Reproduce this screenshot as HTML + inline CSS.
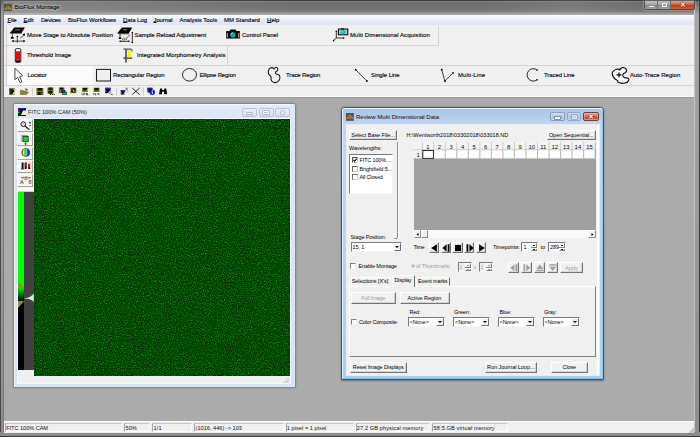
<!DOCTYPE html>
<html><head><meta charset="utf-8"><title>BioFlux Montage</title>
<style>
html,body{margin:0;padding:0;}
body{width:700px;height:437px;overflow:hidden;position:relative;background:#ababab;font-family:"Liberation Sans",sans-serif;font-size:6px;color:#111;}
.a{position:absolute;}
.t{position:absolute;white-space:nowrap;line-height:8px;height:8px;}
/* main frame */
#titlebar{left:0;top:0;width:700px;height:15px;background:linear-gradient(90deg,rgba(255,255,255,.16) 0,rgba(255,255,255,.12) 80px,rgba(255,255,255,0) 300px,rgba(255,255,255,0) 480px,rgba(255,255,255,.07) 570px,rgba(255,255,255,0) 640px),linear-gradient(#3e3e3e 0,#3e3e3e 0.7px,#8a8a8a 1px,#6e6e6e 2.2px,#707070 6px,#787878 11px,#8c8c8c 12.5px,#a6a6a6 14px);}
#menubar{left:4px;top:14.5px;width:690px;height:11px;background:linear-gradient(#fbfcfe,#e4e9f6 60%,#dde3f2);border-bottom:1px solid #f0f0f0;}
#tb{left:4px;top:25px;width:690px;height:72px;background:#f0f0f0;}
.hl{position:absolute;height:1px;background:#d4d4d4;}
.vl{position:absolute;width:1px;background:#d4d4d4;}
#lb,#rb{top:1px;height:436px;background:linear-gradient(#6a6a6a 0,#a6a6a6 14px,#a2a2a2 100px,#8c8c8c 100%);box-sizing:border-box}
#lb{width:4px;border-left:1px solid #4a4a4a;border-right:1px solid #7a7a7a}
#rb{width:6px;border-right:1px solid #3c3c3c;border-left:1px solid #c4c4c4}
#bb{left:0;top:432px;width:700px;height:5px;background:#8c8c8c;border-bottom:1px solid #3c3c3c;box-sizing:border-box}
#status{left:4px;top:421px;width:690px;height:11.5px;background:#f0f0f0;border-top:1px solid #fbfbfb;box-sizing:border-box}
.pane{position:absolute;top:1.4px;height:8.6px;border:1px solid;border-color:#c4c4c4 #fcfcfc #fcfcfc #a4a4a4;box-sizing:border-box;}
.pane span{position:absolute;left:0.2px;top:-0.4px;line-height:8px;font-size:5.6px;white-space:nowrap;color:#111}
u{text-decoration-thickness:0.5px;text-underline-offset:0.4px}
.m{font-size:6px;color:#0a0a12;top:16px;-webkit-text-stroke:0.15px #0a0a12;}
.tbt{font-size:6px;color:#0a0a12;-webkit-text-stroke:0.15px #0a0a12;}
/* child windows */
.win{position:absolute;box-sizing:border-box;border:1px solid #5a6470;border-radius:3px;}
.d{font-size:5.5px;color:#000;font-family:"Liberation Sans",sans-serif;}
.btn{position:absolute;box-sizing:border-box;border:1px solid;border-color:#fff #747474 #747474 #fff;background:#f1f1f1;box-shadow:inset -0.6px -0.6px 0 #bcbcbc;text-align:center;font-size:5.5px;line-height:9px;white-space:nowrap;}
.btn.dis{color:#a0a0a0;}
.sunk{position:absolute;box-sizing:border-box;border:1px solid;border-color:#7c7c7c #f6f6f6 #f6f6f6 #7c7c7c;background:#fff;}
.cb{position:absolute;box-sizing:border-box;width:5.6px;height:5.6px;border:1px solid;border-color:#808080 #f0f0f0 #f0f0f0 #808080;background:#fff;}
.dd{position:absolute;right:0;top:0;bottom:0;width:7.5px;background:#f0f0f0;box-sizing:border-box;border:1px solid;border-color:#fff #707070 #707070 #fff;}
.dd:after{content:"";position:absolute;left:0.9px;top:2.3px;border:2px solid transparent;border-top:2px solid #000;border-bottom:none;}

.cap{box-sizing:border-box;border:1px solid #b7c3d2;border-radius:2px;background:linear-gradient(#e9eff7,#d5dfec);}
.cap i{position:absolute;box-sizing:border-box;background:#fff;box-shadow:0 0 0 0.6px #8d97a5;}
.cap b{position:absolute;left:0;right:0;top:0;text-align:center;font-size:6px;line-height:8px;color:#f2f4f8;text-shadow:0 0 1px #6b7480,0 0 1px #6b7480;font-weight:normal}
.tool{left:17.4px;width:16.1px;height:13px;box-sizing:border-box;background:#f6f6f6;border:1px solid;border-color:#fff #a4a4a4 #a4a4a4 #fff;}

.cap2{box-sizing:border-box;border:1px solid #879bb8;border-radius:2px;background:linear-gradient(#cfdcf0,#b4c7e3 48%,#a3b9da 52%,#b6cae6);box-shadow:inset 0 0 0 0.7px rgba(255,255,255,.4)}
.cap2 i{position:absolute;box-sizing:border-box;background:#fff;box-shadow:0 0 0 0.7px #6c788c;}
.cap2.cl{background:linear-gradient(#e6a99c,#d2634f 50%,#c23c24 51%,#d8694a);border-color:#7a3a30}
.cap2 b{position:absolute;left:0;right:0;top:-0.6px;text-align:center;font-size:6.5px;line-height:8px;color:#fff;text-shadow:0 0 1px #4a2018,0 0 1px #4a2018;font-weight:bold}
.d .t{font-size:5.5px;color:#000}
.d .t.g{color:#a0a0a0}
.gh{position:absolute;box-sizing:border-box;background:#f0f0f0;border-right:1px solid #a0a0a0;border-bottom:1px solid #a0a0a0;text-align:center;font-size:5.9px;line-height:8px;color:#000;-webkit-text-stroke:0.1px #000}
.gc{position:absolute;box-sizing:border-box;background:#fff;border-right:1px solid #b8b8b8;border-bottom:1px solid #b8b8b8}
.pb svg{position:absolute;left:0.7px;top:1px;width:8px;height:8px}
.pb.dis svg{fill:#a0a0a0;left:1.2px;top:1.4px;width:7.6px;height:7.6px}
.spin u{position:absolute;right:0;top:0;bottom:0;width:6px;background:#f0f0f0;box-sizing:border-box;border:1px solid;border-color:#fff #808080 #808080 #fff}
.spin u:before{content:"";position:absolute;left:-1px;right:-1px;top:2.8px;height:1px;background:#808080;box-shadow:0 1px 0 #fff}
.spin u:after{content:"";position:absolute;left:1px;top:0.8px;width:2px;height:1px;background:#222;box-shadow:0 4px 0 #222}
.spin.dis u:after{background:#a0a0a0;box-shadow:0 4px 0 #a0a0a0}
.spin.dis{background:#f0f0f0}
.tab{box-sizing:border-box;border:1px solid;border-color:#fff #696969 transparent #fff;background:#f0f0f0;font-size:5.5px;line-height:7.2px;text-align:center;white-space:nowrap;border-radius:1px 1px 0 0}
.tab.sel{border-bottom:none;line-height:9px}
</style></head><body>

<!-- MAIN FRAME -->
<div class="a" id="titlebar"></div>
<div class="a" id="lb" style="left:0"></div>
<div class="a" id="rb" style="left:694px"></div>
<div class="a" id="bb"></div>
<div class="a" id="menubar"></div>
<div class="a" id="tb"></div>


<!-- main caption buttons -->
<div class="a" style="left:644px;top:0.8px;width:51px;height:9px;border-radius:0 0 2.5px 2.5px;border:1px solid #4a4a4a;border-top:none;box-sizing:border-box;overflow:hidden;box-shadow:0 0 0 0.6px rgba(255,255,255,.35)">
 <div class="a" style="left:0;top:0;width:12.8px;height:9px;background:linear-gradient(#c0c0c0,#a0a0a0 45%,#8c8c8c 50%,#a8a8a8);border-right:1px solid #6a6a6a;box-sizing:border-box"><i class="a" style="left:3.8px;top:4.8px;width:5px;height:1.6px;background:#f8f8f8;box-shadow:0 0 1px #444"></i></div>
 <div class="a" style="left:12.8px;top:0;width:13.2px;height:9px;background:linear-gradient(#c0c0c0,#a0a0a0 45%,#8c8c8c 50%,#a8a8a8);border-right:1px solid #6a6a6a;box-sizing:border-box"><i class="a" style="left:4px;top:2.2px;width:5px;height:4px;border:1px solid #f4f4f4;border-top-width:1.3px;box-sizing:border-box;box-shadow:0 0 1px #444;background:#999"></i></div>
 <div class="a" style="left:26px;top:0;width:24px;height:9px;background:linear-gradient(#e2a593,#d0563a 45%,#c23a1c 50%,#d86a3e);text-align:center;color:#fff;font-size:7px;line-height:8px;font-weight:bold;text-shadow:0 0 1px #401008,0 0 1px #401008">&#10005;</div>
</div>
<!-- title -->
<svg class="a" style="left:4.3px;top:3.5px" width="7.6" height="7.6" viewBox="0 0 9 9"><rect width="9" height="9" fill="#46505a"/><path d="M1.1 7.2 V5.9 Q1.2 4.6 2.6 4.6 H3.4 M7.9 7.2 V5.9 Q7.8 4.6 6.4 4.6 H5.6 M3.4 7.2 V3.6 Q3.5 2.3 4.5 2.3 Q5.5 2.3 5.6 3.6 V7.2" fill="none" stroke="#f0a020" stroke-width="0.95"/></svg>
<div class="t" style="left:14.6px;top:3.4px;font-size:6px;color:#000;-webkit-text-stroke:0.12px #000;text-shadow:0 0 2px #e8e8e8,0 0 3px #dcdcdc,0 0 4px #d0d0d0">BioFlux Montage</div>

<!-- menu -->
<div class="t m" style="left:7.5px;letter-spacing:-0.168px"><u>F</u>ile</div>
<div class="t m" style="left:23.5px;letter-spacing:-0.086px"><u>E</u>dit</div>
<div class="t m" style="left:41px;letter-spacing:-0.263px">Devices</div>
<div class="t m" style="left:68px;letter-spacing:-0.073px">BioFlux Workflows</div>
<div class="t m" style="left:123px;letter-spacing:-0.045px"><u>D</u>ata Log</div>
<div class="t m" style="left:153.5px;letter-spacing:-0.113px"><u>J</u>ournal</div>
<div class="t m" style="left:179.5px;letter-spacing:-0.016px">Analysis Tools</div>
<div class="t m" style="left:224px;letter-spacing:-0.020px">MM Standard</div>
<div class="t m" style="left:267px;letter-spacing:0.039px"><u>H</u>elp</div>

<!-- toolbar lines -->
<div class="hl" style="left:4px;top:45px;width:435px"></div>
<div class="vl" style="left:438px;top:26px;height:20px"></div>
<div class="hl" style="left:4px;top:65px;width:690px"></div>
<div class="vl" style="left:227px;top:46px;height:20px"></div>
<div class="hl" style="left:4px;top:85px;width:690px"></div>
<div class="hl" style="left:4px;top:96px;width:690px;background:#fafafa"></div>
<div class="hl" style="left:4px;top:97px;width:690px;background:#9a9a9a"></div>

<div class="vl" style="left:6px;top:26px;height:19px;background:#cfcfcf"></div><div class="vl" style="left:6px;top:46px;height:19px;background:#cfcfcf"></div><div class="vl" style="left:6px;top:66px;height:19px;background:#cfcfcf"></div>
<!-- toolbar text -->
<div class="t tbt" style="left:27px;top:31px;letter-spacing:-0.013px">Move Stage to Absolute Position</div>
<div class="t tbt" style="left:134.5px;top:31px;letter-spacing:-0.036px">Sample Reload Adjustment</div>
<div class="t tbt" style="left:242px;top:31px;letter-spacing:-0.020px">Control Panel</div>
<div class="t tbt" style="left:350px;top:31px;letter-spacing:0.072px">Multi Dimensional Acquisition</div>
<div class="t tbt" style="left:27px;top:51.1px;letter-spacing:-0.069px">Threshold Image</div>
<div class="t tbt" style="left:137px;top:51.1px;letter-spacing:0.028px">Integrated Morphometry Analysis</div>
<div class="a" style="left:7px;top:66px;width:86px;height:19px;background:#fbfbfb"></div>
<div class="t tbt" style="left:27.5px;top:71.1px;letter-spacing:-0.117px">Locator</div>
<div class="t tbt" style="left:113px;top:71.1px;letter-spacing:-0.091px">Rectangular Region</div>
<div class="t tbt" style="left:199.5px;top:71.1px;letter-spacing:-0.147px">Ellipse Region</div>
<div class="t tbt" style="left:286px;top:71.1px;letter-spacing:-0.125px">Trace Region</div>
<div class="t tbt" style="left:371px;top:71.1px;letter-spacing:-0.100px">Single Line</div>
<div class="t tbt" style="left:458px;top:71.1px;letter-spacing:0.108px">Multi-Line</div>
<div class="t tbt" style="left:544px;top:71.1px;letter-spacing:-0.097px">Traced Line</div>
<div class="t tbt" style="left:630px;top:71.1px;letter-spacing:0.009px">Auto-Trace Region</div>


<!-- IMAGE WINDOW -->
<div class="win" id="imgwin" style="left:13px;top:103px;width:283px;height:285px;background:linear-gradient(#e3ecf7,#dbe6f3 16px,#d5e3f3);border-color:#7f8790;border-radius:3px 3px 1px 1px;box-shadow:0 0 1.5px rgba(0,0,0,.3)">
 <div class="a" style="left:0;top:0;right:0;bottom:0;border:1px solid;border-color:#f6f9fc #dbe8f6 #dbe8f6 #f2f6fb;border-radius:2px 2px 0 0"></div>
</div>
<svg class="a" style="left:18px;top:108px" width="8" height="8" viewBox="0 0 8 8"><rect width="8" height="8" fill="#111"/><rect width="8" height="1.5" fill="#1414c8"/><rect x="0" y="1.5" width="1.5" height="2" fill="#c01010"/><rect x="0" y="3.5" width="1.5" height="2" fill="#10c010"/><path d="M3 7 L5 2.5 L8 2.5 L8 7Z" fill="#e8e8e8"/></svg>
<div class="t" style="left:28px;top:108px;font-size:5.7px;letter-spacing:-0.05px;color:#1a1a1a">FITC 100% CAM (50%)</div>
<div class="a cap" style="left:242px;top:108px;width:15px;height:9px"><i style="left:4.2px;top:3.5px;width:4.8px;height:1.7px"></i></div>
<div class="a cap" style="left:258.5px;top:108px;width:15px;height:9px"><i style="left:3.9px;top:1.6px;width:5.2px;height:3.8px;border:1px solid #fff;border-top-width:1.2px;background:#b4bdc9"></i></div>
<div class="a cap" style="left:275px;top:108px;width:15px;height:9px"><b>&#10006;</b></div>
<div class="a" style="left:17px;top:118px;width:274px;height:266px;background:#f0f0f0;border:1px solid #f4f8fc;box-sizing:border-box"></div>
<svg class="a" style="left:33.5px;top:118.5px" width="256.6" height="257.3"><filter id="nz" x="0" y="0" width="100%" height="100%" color-interpolation-filters="sRGB"><feTurbulence type="fractalNoise" baseFrequency="0.85" numOctaves="2" seed="7" result="n"/><feColorMatrix type="matrix" in="n" values="0.25 0 0 0 -0.13  0.66 0 0 0 -0.032  0.25 0 0 0 -0.13  0 0 0 0 1"/></filter><rect width="257" height="257.5" fill="#0a5a0a" filter="url(#nz)"/></svg>
<!-- tool buttons -->
<div class="a tool" style="top:119px"></div>
<div class="a tool" style="top:133px"></div>
<div class="a tool" style="top:146.5px"></div>
<div class="a tool" style="top:160px"></div>
<div class="a tool" style="top:173.5px"></div>

<svg class="a" style="left:17px;top:118px" width="18" height="75" viewBox="17 118 18 75">
<circle cx="23.3" cy="124.2" r="2.4" fill="#ddd" stroke="#111" stroke-width="0.9"/><path d="M25 126 L29.3 129.6" stroke="#111" stroke-width="1.2"/><path d="M29 122.6 h2 M30 121.6 v2 M29 125.6 h2" stroke="#22c" stroke-width="0.8"/>
<rect x="21.8" y="135.4" width="5.4" height="5.4" fill="none" stroke="#888" stroke-width="0.8"/><rect x="23" y="136.5" width="5.2" height="5.2" fill="#0e0" stroke="#111" stroke-width="0.7"/><path d="M25.6 141.8 V144.6 M24.6 143.4 L25.6 144.8 L26.6 143.4" stroke="#111" stroke-width="0.6" fill="none"/>
<defs><linearGradient id="rbw" x1="0" x2="1" y1="0" y2="0"><stop offset="0" stop-color="#e11"/><stop offset=".2" stop-color="#fe1"/><stop offset=".42" stop-color="#1e1"/><stop offset=".6" stop-color="#1ee"/><stop offset=".78" stop-color="#11e"/><stop offset="1" stop-color="#e1e"/></linearGradient></defs>
<circle cx="25.8" cy="152.4" r="4" fill="url(#rbw)" stroke="#222" stroke-width="0.6"/>
<rect x="21.6" y="162.5" width="2" height="6" fill="#111"/><rect x="21" y="168.4" width="3.2" height="1" fill="#111"/><rect x="24.7" y="162.5" width="2" height="6.5" fill="#111"/><rect x="24.7" y="163.4" width="2" height="2.6" fill="#e11"/><rect x="28" y="162.5" width="2.2" height="6.5" fill="#e11"/><rect x="28" y="162.5" width="2.2" height="1.4" fill="#eee"/><rect x="28" y="167.6" width="2.2" height="1.4" fill="#222"/>
<path d="M21 177.4 H31 M26 176 V179 M21.4 177.4 q1.2 2.4 2.6 0 M28 177.4 q1.2 2.4 2.6 0 M24 179.2 h4" stroke="#a55a20" stroke-width="0.8" fill="none"/>
</svg>
<div class="t" style="left:20px;top:178.4px;font-size:5.5px;color:#111">A</div>
<div class="t" style="left:28.4px;top:178.4px;font-size:5.5px;color:#333">8</div>
<div class="a" style="left:17.6px;top:187px;width:15.8px;height:4.6px;background:#f6f6f6;border-bottom:1px solid #ccc;box-sizing:border-box"></div>
<!-- LUT -->
<div class="a" style="left:33.2px;top:192px;width:0.6px;height:178px;background:repeating-linear-gradient(#8a8a8a 0,#8a8a8a 1px,#4a4a4a 1px,#4a4a4a 2px)"></div>
<div class="a" style="left:17.8px;top:192px;width:6.2px;height:178px;background:linear-gradient(#00ff00 0,#00ff00 95.7px,#00e800 96px,#000 109px,#000 100%)"></div>
<div class="a" style="left:24px;top:192px;width:9.6px;height:178px;background:#414141"></div>
<svg class="a" style="left:17.8px;top:280px" width="16" height="30" viewBox="0 0 16 30"><path d="M0 2 L6.2 7.7 L0 7.7Z" fill="#8f8f1e"/><path d="M0 21 L6.2 21 L0 28Z" fill="#8f8f1e"/><path d="M6.8 18 Q13 17.6 15.8 13.4 L15.8 22 Q13 18.8 6.8 18.5Z" fill="#e4e4e4"/></svg>
<svg class="a" style="left:283px;top:377px" width="7" height="7" viewBox="0 0 7 7"><path d="M6 0.5 L0.5 6 M6 3 L3 6 M6 5.2 L5.2 6" stroke="#b5b5b5" stroke-width="1"/></svg>

<!-- DIALOG -->
<div class="win" id="dlg" style="left:341px;top:107px;width:262.5px;height:272.5px;background:linear-gradient(#a8c4e6,#b2cbea 8px,#c2d6ef 16px,#b9d3f0 50%,#a9cff2);border-color:#4b535e;border-radius:3.5px 3.5px 1px 1px;box-shadow:0 0.5px 2px rgba(0,0,0,.35)">
 <div class="a" style="left:0;top:0;right:0;bottom:0;border:1px solid;border-color:#eef4fb #86c8f3 #74c2f2 #e2edf9;border-radius:2.5px 2.5px 0 0"></div>
</div>
<svg class="a" style="left:346px;top:112.8px" width="7.8" height="7.8" viewBox="0 0 9 9"><rect width="9" height="9" fill="#46505a"/><path d="M1.1 7.2 V5.9 Q1.2 4.6 2.6 4.6 H3.4 M7.9 7.2 V5.9 Q7.8 4.6 6.4 4.6 H5.6 M3.4 7.2 V3.6 Q3.5 2.3 4.5 2.3 Q5.5 2.3 5.6 3.6 V7.2" fill="none" stroke="#f0a020" stroke-width="0.95"/></svg>
<div class="t" style="left:356px;top:112.5px;font-size:6px;color:#0a0a0a">Review Multi Dimensional Data</div>
<div class="a cap2" style="left:550.3px;top:112.3px;width:14.8px;height:8.4px"><i style="left:4.2px;top:3.8px;width:5px;height:1.7px"></i></div>
<div class="a cap2" style="left:566.7px;top:112.3px;width:14.6px;height:8.4px;opacity:.75"><i style="left:4px;top:1.4px;width:5px;height:4px;background:#c4d0e2;border:0.8px solid #e8eef6;box-shadow:0 0 0 0.7px #7c889c"></i></div>
<div class="a cap2 cl" style="left:583px;top:112.3px;width:15.5px;height:8.4px"><b>&#10005;</b></div>
<div class="a" style="left:346px;top:123.5px;width:254px;height:252px;background:#fff;border:1px solid #e6eef8;box-sizing:border-box"></div>
<div class="a" style="left:347px;top:124.5px;width:250px;height:250px;background:#f0f0f0"></div>
<div class="d">
<div class="btn" style="left:349px;top:130px;width:48px;height:10px"><span style="letter-spacing:-0.049px">Select Base File...</span></div>
<div class="t" style="left:406.5px;top:131px"><span style="letter-spacing:0.028px">H:\Wentworth2018\03302018\033018.ND</span></div>
<div class="btn" style="left:547px;top:130px;width:48.5px;height:10px"><span style="letter-spacing:-0.048px">Open Sequential...</span></div>
<div class="t" style="left:349px;top:143.5px"><span style="letter-spacing:-0.035px">Wavelengths:</span></div>
<div class="sunk" style="left:349px;top:153.5px;width:44px;height:40.5px"></div>
<div class="cb" style="left:351.6px;top:157.2px;width:6.2px;height:6px;border-color:#5a5a5a #c8c8c8 #c8c8c8 #5a5a5a"><svg class="a" style="left:0;top:0" width="4" height="4" viewBox="0 0 4 4"><path d="M0.4 1.9 L1.6 3.3 L3.9 0.5" fill="none" stroke="#000" stroke-width="1.1"/></svg></div>
<div class="t" style="left:359.5px;top:156.2px"><span style="letter-spacing:-0.149px">FITC 100% ...</span></div>
<div class="cb" style="left:351.6px;top:165.7px;width:6.2px;height:6px;border-color:#6a6a6a #c8c8c8 #c8c8c8 #6a6a6a"></div>
<div class="t" style="left:359.5px;top:164.7px"><span style="letter-spacing:-0.059px">Brightfield 5...</span></div>
<div class="cb" style="left:351.6px;top:174.2px;width:6.2px;height:6px;border-color:#6a6a6a #c8c8c8 #c8c8c8 #6a6a6a"></div>
<div class="t" style="left:359.5px;top:173.2px"><span style="letter-spacing:-0.157px">All Closed</span></div>
<div class="a" style="left:396.5px;top:142px;width:1px;height:96px;background:#8a8a8a;box-shadow:1px 0 0 #fff"></div>
<div class="a" style="left:394px;top:237.5px;width:3px;height:1px;background:#8a8a8a"></div>
<!-- grid -->
<div class="a" style="left:413.5px;top:142.3px;width:182px;height:88px;background:#a0a0a0"></div>
<svg class="a" style="left:413.3px;top:142.3px" width="182.3" height="17" viewBox="0 0 182.3 17" font-family="Liberation Sans, sans-serif" font-size="5.9" text-anchor="middle" fill="#0a0a0a">
<rect x="0" y="0" width="182.3" height="7.8" fill="#f3f3f3"/><rect x="0" y="7.8" width="9.2" height="9" fill="#f3f3f3"/><rect x="9.2" y="7.8" width="173.10000000000002" height="9" fill="#fff"/>
<path d="M0 7.8 H182.3" stroke="#c8c8c8" stroke-width="0.7"/><path d="M0 16.6 H182.3" stroke="#a8a8a8" stroke-width="0.6"/>
<path d="M9.20 0 V7.8 M20.73 0 V7.8 M32.27 0 V7.8 M43.80 0 V7.8 M55.33 0 V7.8 M66.87 0 V7.8 M78.40 0 V7.8 M89.93 0 V7.8 M101.47 0 V7.8 M113.00 0 V7.8 M124.53 0 V7.8 M136.07 0 V7.8 M147.60 0 V7.8 M159.13 0 V7.8 M170.67 0 V7.8 M182.20 0 V7.8 " stroke="#c4c4c4" stroke-width="0.8"/><path d="M9.20 7.8 V16.8 M20.73 7.8 V16.8 M32.27 7.8 V16.8 M43.80 7.8 V16.8 M55.33 7.8 V16.8 M66.87 7.8 V16.8 M78.40 7.8 V16.8 M89.93 7.8 V16.8 M101.47 7.8 V16.8 M113.00 7.8 V16.8 M124.53 7.8 V16.8 M136.07 7.8 V16.8 M147.60 7.8 V16.8 M159.13 7.8 V16.8 M170.67 7.8 V16.8 M182.20 7.8 V16.8 " stroke="#a0a0a0" stroke-width="0.8"/>
<text x="14.97" y="6.8">1</text><text x="26.50" y="6.8">2</text><text x="38.03" y="6.8">3</text><text x="49.57" y="6.8">4</text><text x="61.10" y="6.8">5</text><text x="72.63" y="6.8">6</text><text x="84.17" y="6.8">7</text><text x="95.70" y="6.8">8</text><text x="107.23" y="6.8">9</text><text x="118.77" y="6.8">10</text><text x="130.30" y="6.8">11</text><text x="141.83" y="6.8">12</text><text x="153.37" y="6.8">13</text><text x="164.90" y="6.8">14</text><text x="176.43" y="6.8">15</text><text x="5.20" y="14.9">1</text>
<rect x="9.80" y="8.5" width="10.63" height="7.9" fill="#fff" stroke="#2a2a2a" stroke-width="1"/>
</svg>
<div class="a" style="left:413.5px;top:230.3px;width:182px;height:7.7px;background:#fafafa"></div>
<div class="a" style="left:413.5px;top:230.3px;width:7.5px;height:7.7px;background:#f0f0f0;box-sizing:border-box;border:1px solid;border-color:#fff #8a8a8a #8a8a8a #fff"><svg class="a" style="left:1.5px;top:1.5px" width="3" height="3" viewBox="0 0 3 3"><path d="M2.5 0 L0.5 1.5 L2.5 3Z"/></svg></div>
<div class="a" style="left:421px;top:230.3px;width:7px;height:7.7px;background:#f0f0f0;box-sizing:border-box;border:1px solid;border-color:#fff #8a8a8a #8a8a8a #fff"></div>
<div class="a" style="left:588px;top:230.3px;width:7.5px;height:7.7px;background:#f0f0f0;box-sizing:border-box;border:1px solid;border-color:#fff #8a8a8a #8a8a8a #fff"><svg class="a" style="left:2px;top:1.5px" width="3" height="3" viewBox="0 0 3 3"><path d="M0.5 0 L2.5 1.5 L0.5 3Z"/></svg></div>
<!-- stage position -->
<div class="t" style="left:350.5px;top:233px"><span style="letter-spacing:-0.100px">Stage Position:</span></div>
<div class="sunk" style="left:350.5px;top:242px;width:51.5px;height:10px"><span class="t" style="left:1px;top:0px"><span style="letter-spacing:-0.127px">15, 1</span></span><div class="dd"></div></div>
<div class="t" style="left:413.5px;top:242.5px"><span style="letter-spacing:-0.358px">Time</span></div>
<div class="btn pb" style="left:428.7px;top:241.5px;width:10.3px;height:11px"><svg width="7" height="7" viewBox="0 0 7 7"><path d="M6 0.3 L1 3.5 L6 6.7Z"/></svg></div>
<div class="btn pb" style="left:440.5px;top:241.5px;width:10.3px;height:11px"><svg width="7" height="7" viewBox="0 0 7 7"><path d="M4 0.3 L0.3 3.5 L4 6.7Z M5 0.3h1.5v6.4h-1.5z"/></svg></div>
<div class="btn pb" style="left:452.3px;top:241.5px;width:10.3px;height:11px"><svg width="7" height="7" viewBox="0 0 7 7"><path d="M0.8 0.8h5.4v5.4h-5.4z"/></svg></div>
<div class="btn pb" style="left:464.1px;top:241.5px;width:10.3px;height:11px"><svg width="7" height="7" viewBox="0 0 7 7"><path d="M3 0.3 L6.7 3.5 L3 6.7Z M0.5 0.3h1.5v6.4h-1.5z"/></svg></div>
<div class="btn pb" style="left:475.9px;top:241.5px;width:10.3px;height:11px"><svg width="7" height="7" viewBox="0 0 7 7"><path d="M1 0.3 L6 3.5 L1 6.7Z"/></svg></div>
<div class="t" style="left:493px;top:242.5px"><span style="letter-spacing:-0.139px">Timepoints:</span></div>
<div class="sunk spin" style="left:521px;top:242px;width:17px;height:9.5px"><span class="t" style="left:1.5px;top:0">1</span><u></u></div>
<div class="t" style="left:540.5px;top:242.5px">to</div>
<div class="sunk spin" style="left:548px;top:242px;width:17.5px;height:9.5px"><span class="t" style="left:1px;top:0">289</span><u></u></div>
<!-- montage row -->
<div class="cb" style="left:350px;top:263px;width:5.5px;height:5.5px"></div>
<div class="t" style="left:358.5px;top:262px"><span style="letter-spacing:-0.126px">Enable Montage</span></div>
<div class="t g" style="left:411.5px;top:262px"><span style="letter-spacing:-0.091px"># of Thumbnails:</span></div>
<div class="sunk spin dis" style="left:457.5px;top:262px;width:14.5px;height:9.5px"><span class="t g" style="left:1px;top:0">1</span><u></u></div>
<div class="t g" style="left:473.5px;top:262.5px">x</div>
<div class="sunk spin dis" style="left:478.5px;top:262px;width:14px;height:9.5px"><span class="t g" style="left:1px;top:0">1</span><u></u></div>
<div class="btn pb dis" style="left:508.3px;top:261.5px;width:11px;height:11.5px"><svg width="7" height="7" viewBox="0 0 7 7"><path d="M4 0.3 L0.3 3.5 L4 6.7Z M5 0.3h1.5v6.4h-1.5z"/></svg></div>
<div class="btn pb dis" style="left:521px;top:261.5px;width:11px;height:11.5px"><svg width="7" height="7" viewBox="0 0 7 7"><path d="M3 0.3 L6.7 3.5 L3 6.7Z M0.5 0.3h1.5v6.4h-1.5z"/></svg></div>
<div class="btn pb dis" style="left:533.7px;top:261.5px;width:11px;height:11.5px"><svg width="7" height="7" viewBox="0 0 7 7"><path d="M3.5 0.5 L6.7 4.5 L0.3 4.5Z M0.3 5.3h6.4v1.4h-6.4z"/></svg></div>
<div class="btn pb dis" style="left:546.6px;top:261.5px;width:11px;height:11.5px"><svg width="7" height="7" viewBox="0 0 7 7"><path d="M3.5 6.5 L6.7 2.5 L0.3 2.5Z M0.3 0.3h6.4v1.4h-6.4z"/></svg></div>
<div class="btn dis" style="left:560px;top:261.5px;width:23px;height:11.5px;line-height:10px"><span style="letter-spacing:-0.233px">Apply</span></div>
<!-- tabs -->
<div class="a" style="left:349px;top:285.5px;width:246.5px;height:71px;box-sizing:border-box;border:1px solid;border-color:#fff #808080 #808080 #fff"></div>
<div class="a tab" style="left:350.5px;top:277px;width:41px;height:8.5px;border-right-color:transparent;padding-right:2px"><span style="letter-spacing:-0.052px">Selections [X's]</span></div>
<div class="a tab" style="left:415.5px;top:277px;width:34.5px;height:8.5px"><span style="letter-spacing:-0.098px">Event marks</span></div>
<div class="a tab sel" style="left:391.5px;top:275px;width:23px;height:11.5px"><span style="letter-spacing:-0.164px">Display</span></div>
<div class="btn dis" style="left:350.5px;top:292px;width:45.5px;height:12px;line-height:10.5px"><span style="letter-spacing:-0.169px">Full Image</span></div>
<div class="btn" style="left:399.5px;top:292px;width:50px;height:12px;line-height:10.5px"><span style="letter-spacing:-0.011px">Active Region</span></div>
<div class="t" style="left:409.5px;top:308px"><span style="letter-spacing:-0.206px">Red:</span></div>
<div class="t" style="left:454px;top:308px"><span style="letter-spacing:-0.105px">Green:</span></div>
<div class="t" style="left:499.5px;top:308px"><span style="letter-spacing:-0.189px">Blue:</span></div>
<div class="t" style="left:544px;top:308px"><span style="letter-spacing:-0.171px">Gray:</span></div>
<div class="sunk" style="left:407.5px;top:316.5px;width:37px;height:10px"><span class="t" style="left:1px;top:0"><span style="letter-spacing:-0.063px">&lt;None&gt;</span></span><div class="dd"></div></div>
<div class="sunk" style="left:453px;top:316.5px;width:36.5px;height:10px"><span class="t" style="left:1px;top:0"><span style="letter-spacing:-0.063px">&lt;None&gt;</span></span><div class="dd"></div></div>
<div class="sunk" style="left:497.5px;top:316.5px;width:37px;height:10px"><span class="t" style="left:1px;top:0"><span style="letter-spacing:-0.063px">&lt;None&gt;</span></span><div class="dd"></div></div>
<div class="sunk" style="left:542.5px;top:316.5px;width:37px;height:10px"><span class="t" style="left:1px;top:0"><span style="letter-spacing:-0.063px">&lt;None&gt;</span></span><div class="dd"></div></div>
<div class="cb" style="left:351px;top:319px"></div>
<div class="t" style="left:359px;top:318px"><span style="letter-spacing:-0.211px">Color Composite</span></div>
<div class="btn" style="left:349.5px;top:362px;width:57.5px;height:11px;line-height:9.5px"><span style="letter-spacing:-0.130px">Reset Image Displays</span></div>
<div class="btn" style="left:484.5px;top:362px;width:52.5px;height:11px;line-height:9.5px"><span style="letter-spacing:-0.038px">Run Journal Loop...</span></div>
<div class="btn" style="left:550.5px;top:362px;width:37.5px;height:11px;line-height:9.5px"><span style="letter-spacing:-0.132px">Close</span></div>
</div>



<!-- TOOLBAR ICONS -->
<svg class="a" style="left:0;top:0" width="700" height="100" viewBox="0 0 700 100">
<!-- move stage -->
<path d="M14.3 27.4 L24.9 27.4 L21.6 32.8 L21.6 33.6 L10 33.6 L10 32.8Z" fill="#000"/>
<rect x="15.3" y="29.3" width="4.7" height="1.1" fill="#777"/>
<path d="M12.3 33.6 V37.5 M17.3 36.4 V42.8 M12.6 41.1 H24.4 M20.4 38.2 L24 34.6" stroke="#000" stroke-width="0.7" fill="none"/>
<path d="M10.9 36.9 h2.8 v1.9 h-2.8z M16.2 37 L17.3 35.5 L18.4 37z M11.6 41.1 l2-1.3v2.6z M25.4 41.1 l-2-1.3v2.6z M25.2 33.4 l-2.8 0.8 l2 2z" fill="#000"/>
<!-- sample reload -->
<path d="M122 27.4 L132.3 27.4 L129 32.8 L129 33.8 L117.7 33.8 L117.7 32.8Z" fill="#000"/>
<ellipse cx="125.3" cy="29.8" rx="2.2" ry="0.8" fill="#777"/>
<path d="M119.5 33.8 H129 V35.2 H119.5Z" fill="#999" opacity=".55"/><path d="M126 37.6 H128 V36 H129.8 V34.4" stroke="#666" stroke-width="0.6" fill="none"/>
<path d="M120 33.8 V38 M119.6 41.3 H129.5 M132.3 32.3 V42.8" stroke="#000" stroke-width="0.8" fill="none"/>
<path d="M118.8 37.4 h2.5 v1.7 h-2.5z M119.2 41.3 l1.5-1v2z M129.9 41.3 l-1.5-1v2z M132.3 31.6 l-1 1.5h2z M132.3 43.4 l-1-1.5h2z" fill="#000"/>
<path d="M122.3 40 L123.6 37.4 L124.9 40Z M125.4 38 l1.5 2 m0-2 l-1.5 2" stroke="#333" stroke-width="0.5" fill="none"/>
<!-- camera -->
<path d="M226.2 30.9 h3.3 l1-1.4 h5 l1 1.4 h3.3 v7.6 h-13.6z" fill="#050505"/>
<rect x="227" y="33" width="1" height="4.5" fill="#999"/><rect x="238" y="33" width="1.2" height="4.5" fill="#999"/>
<circle cx="233" cy="35" r="3.2" fill="#222"/><circle cx="233" cy="35" r="2.6" fill="#0aa"/><path d="M231 34.6 a2 2 0 0 1 2.2-1.8" stroke="#4ff" stroke-width="1" fill="none"/><path d="M232 37 L234.5 33.5" stroke="#888" stroke-width="0.6"/>
<!-- multi-dim -->
<rect x="338.4" y="29" width="9.4" height="5.8" fill="#bbb" stroke="#000" stroke-width="1"/>
<rect x="341" y="28.4" width="3" height="1" fill="#000"/>
<circle cx="343" cy="32.3" r="2.3" fill="#0bb"/><circle cx="342.5" cy="31.8" r="0.9" fill="#5ee"/>
<path d="M336.3 31.2 V38 H344 M336.3 38 L333.3 40.8" stroke="#000" stroke-width="0.8" fill="none"/>
<path d="M335.2 31.8 l1.1-1.5 l1.1 1.5z M344.8 38 l-1.6-1.1 v2.2z M332.7 41.5 l0.5-2 l1.5 1.5z" fill="#000"/>
<!-- threshold -->
<rect x="15.3" y="48.7" width="5.5" height="13.6" rx="1" fill="#fff" stroke="#000" stroke-width="0.9"/>
<rect x="15.7" y="51.2" width="4.7" height="8" fill="#f00"/><rect x="15.7" y="59.2" width="4.7" height="1.6" fill="#444"/><rect x="15.7" y="60.6" width="4.7" height="1.4" fill="#000"/>
<!-- morphometry -->
<path d="M126 48.8 V62.6" stroke="#5c5c5c" stroke-width="1.8"/>
<path d="M123.4 49.2 H130.6 Q132 49.2 132 51.4" stroke="#5c5c5c" stroke-width="1.3" fill="none"/>
<path d="M123.4 58.1 H132.2" stroke="#5c5c5c" stroke-width="1.7"/>
<path d="M127.3 50.6 H131.2 V52.3 L130.1 53.8 L131.2 55.3 V57.2 H127.3 V55.3 L128.4 53.8 L127.3 52.3Z" fill="#f4f400"/>
<!-- locator -->
<path d="M14.9 68.3 V79.6 L17.6 77.4 L20 82.6 L22 81.8 L19.6 76.8 L22.6 75.6Z" fill="#fff" stroke="#333" stroke-width="0.9" stroke-linejoin="miter"/>
<!-- rectangle -->
<rect x="96.5" y="69.4" width="14" height="11.6" fill="none" stroke="#1a1a1a" stroke-width="1"/>
<!-- ellipse -->
<ellipse cx="189.5" cy="74.8" rx="7" ry="6.3" fill="none" stroke="#111" stroke-width="0.9"/>
<!-- trace region -->
<path d="M271.40 67.70 C270.17 68.23 269.87 67.50 268.90 69.40 C267.93 71.30 268.20 71.40 268.50 73.40 C268.80 75.40 268.97 74.27 269.80 75.40 C270.63 76.53 270.53 75.40 271.00 76.80 C271.47 78.20 270.57 77.90 271.20 79.60 C271.83 81.30 271.30 80.97 272.90 81.90 C274.50 82.83 273.97 82.90 276.00 82.40 C278.03 81.90 277.73 82.27 279.00 80.40 C280.27 78.53 280.00 78.70 279.80 76.80 C279.60 74.90 279.60 75.70 278.40 74.70 C277.20 73.70 277.13 74.70 276.20 73.80 C275.27 72.90 275.13 73.20 275.60 72.00 C276.07 70.80 276.97 71.53 277.60 70.20 C278.23 68.87 278.20 68.87 277.50 68.00 C276.80 67.13 276.67 67.30 275.50 67.60 C274.33 67.90 274.97 68.83 274.00 68.90 C273.03 68.97 273.47 68.20 272.60 67.80 C271.73 67.40 272.63 67.17 271.40 67.70 Z" fill="none" stroke="#111" stroke-width="1.05"/>
<!-- single line -->
<path d="M355.7 69.7 L366.9 81" stroke="#111" stroke-width="0.8"/><circle cx="355.7" cy="69.7" r="0.9"/><circle cx="366.9" cy="81" r="0.9"/>
<!-- multi line -->
<path d="M441.7 69.7 L444.9 81 L453 72.9" stroke="#111" stroke-width="0.8" fill="none"/><circle cx="441.7" cy="69.7" r="0.9"/><circle cx="444.9" cy="81" r="0.9"/><circle cx="453" cy="72.9" r="0.9"/>
<!-- traced line -->
<path d="M537.1 70 A6.2 6.2 0 1 0 537.1 79.8" stroke="#111" stroke-width="0.9" fill="none"/><circle cx="537.1" cy="70.1" r="0.8"/><circle cx="537.1" cy="79.7" r="0.8"/>
<!-- auto trace -->
<path d="M617.70 69.10 C615.60 69.53 615.00 69.27 613.30 71.20 C611.60 73.13 612.17 72.53 612.60 74.90 C613.03 77.27 613.07 76.47 614.60 78.30 C616.13 80.13 615.60 78.90 617.20 80.40 C618.80 81.90 616.77 81.93 619.40 82.80 C622.03 83.67 622.13 83.67 625.10 83.00 C628.07 82.33 627.30 82.33 628.30 80.80 C629.30 79.27 629.57 79.60 628.10 78.40 C626.63 77.20 625.57 78.57 623.90 77.20 C622.23 75.83 622.40 76.03 623.10 74.30 C623.80 72.57 624.97 73.70 626.00 72.00 C627.03 70.30 627.07 70.67 626.20 69.20 C625.33 67.73 625.10 67.93 623.40 67.60 C621.70 67.27 622.37 67.43 621.10 68.20 C619.83 68.97 620.73 69.60 619.60 69.90 C618.47 70.20 619.80 68.67 617.70 69.10 Z" fill="#f6f6f6" stroke="#111" stroke-width="1.2"/>
<path d="M616.6 74.9 H621.4 M619 72.5 V77.3" stroke="#000" stroke-width="1.15"/>
<!-- small toolbar row -->
<g>
<rect x="9.3" y="88.6" width="5.6" height="6" fill="#111"/><rect x="9.3" y="88.6" width="5.6" height="1.3" fill="#22c"/><rect x="9.3" y="90" width="1" height="1.5" fill="#c22"/><rect x="9.3" y="91.5" width="1" height="1.5" fill="#2c2"/><path d="M12 94.6 L14.9 90.5 V94.6Z" fill="#ddd"/><path d="M14.5 87.6 l0.6 1.6 l1.6 0.4 l-1.6 0.6 l-0.6 1.6 l-0.6-1.6 l-1.6-0.6 l1.6-0.4z" fill="#cc2"/>
<path d="M20.4 94.5 V90.2 H22.8 L23.6 91 H26.4 V92 H28.4 L26.6 94.5Z" fill="#8c8c10" stroke="#4a4a00" stroke-width="0.4"/><path d="M24.5 89 q1.5-1 2.8 0.3 l0.5 -0.5 v1.6 h-1.6 l0.5-0.5 q-0.8-0.8 -1.8-0.3z" fill="#444"/>
<rect x="32" y="87.5" width="0.8" height="8" fill="#c4c4c4"/>
<rect x="36.4" y="88" width="7" height="7" fill="#808000"/><rect x="37.6" y="88" width="4.6" height="2.6" fill="#111"/><rect x="37.6" y="92" width="4.6" height="3" fill="#111"/><rect x="40.6" y="92.6" width="1" height="1.8" fill="#999"/>
<rect x="47.4" y="87.6" width="6" height="6" fill="#808000"/><rect x="48.4" y="87.6" width="4" height="2.2" fill="#111"/><rect x="48.4" y="90.8" width="4" height="2.8" fill="#111"/><rect x="50" y="94" width="1" height="1" fill="#111"/><rect x="51.8" y="94" width="1" height="1" fill="#111"/><rect x="53.6" y="94" width="1" height="1" fill="#111"/>
<rect x="58.8" y="87.6" width="5.6" height="5.6" fill="#808000"/><rect x="59.8" y="87.6" width="3.6" height="2" fill="#111"/><rect x="61" y="90" width="4.4" height="3" fill="#22c"/><rect x="62.4" y="91.8" width="4.4" height="3.2" fill="#111"/><rect x="63" y="92.6" width="3.4" height="2" fill="#2c2"/>
<rect x="70.4" y="87.6" width="6" height="5.6" fill="#808000"/><rect x="71.4" y="88.2" width="4" height="4.2" fill="#111"/><path d="M72.4 88.4 L75 91.8 L73.2 91.4Z" fill="#eee"/>
<rect x="82" y="87.6" width="6" height="4.4" fill="#808000"/><rect x="83" y="88" width="4" height="2.4" fill="#111"/><path d="M86.5 90.5 L89 87.6 L89.6 88.2 L87.2 91Z" fill="#ee2"/><path d="M82 93 v2 M83.5 93 h1.5 v1 h-1.5 v1 M86.5 93 v2 h1 v-2 M89 94.8 v0.4" stroke="#111" stroke-width="0.6" fill="none"/>
<rect x="93.6" y="87.6" width="6" height="4.4" fill="#808000"/><rect x="94.6" y="88" width="4" height="2.4" fill="#111"/><path d="M93.8 93 v2 M95.2 93 v2 h1 M97.6 93 l0.8 2 l0.8-2 M100.2 94.8 v0.4" stroke="#111" stroke-width="0.6" fill="none"/>
<rect x="105" y="87.8" width="5.6" height="5.4" fill="#111"/><rect x="105" y="87.8" width="5.6" height="1.3" fill="#22c"/><rect x="105" y="89.2" width="1" height="1.4" fill="#c22"/><rect x="105" y="90.6" width="1" height="1.4" fill="#2c2"/><path d="M107.5 93.2 L110.6 90 V93.2Z" fill="#ccc"/><path d="M109 93.4 Q111 94.6 111.6 93.6" stroke="#999" stroke-width="0.8" fill="none"/><circle cx="112" cy="94.6" r="0.6"/>
<rect x="116" y="87.5" width="0.8" height="8" fill="#c4c4c4"/>
<rect x="120.8" y="90" width="4" height="4.6" fill="#111"/><rect x="120.8" y="90" width="4" height="1.2" fill="#22c"/><rect x="120.8" y="91.3" width="0.9" height="1.3" fill="#c22"/><rect x="120.8" y="92.6" width="0.9" height="1.3" fill="#2c2"/><path d="M123 94.6 L124.8 92 V94.6Z" fill="#ccc"/><path d="M125.4 87.6 l2.4 3 m0-3 l-2.4 3" stroke="#222" stroke-width="0.6"/>
<path d="M132.2 88 L139.6 94.6 M139.6 88 L132.2 94.6" stroke="#111" stroke-width="0.9"/>
<rect x="143" y="87.5" width="0.8" height="8" fill="#c4c4c4"/>
<rect x="147.4" y="87.8" width="5" height="4.6" fill="#111"/><rect x="147.4" y="87.8" width="5" height="1.2" fill="#22c"/><rect x="147.4" y="89" width="0.9" height="1.3" fill="#c22"/><rect x="147.4" y="90.3" width="0.9" height="1.3" fill="#2c2"/><circle cx="152.2" cy="92.2" r="2.8" fill="#11e"/><rect x="151.8" y="91.4" width="0.9" height="2.6" fill="#fff"/><rect x="151.8" y="90.2" width="0.9" height="0.8" fill="#fff"/>
<path d="M160 88.4 h1.8 l0.6 1.6 h1.4 l0.6-1.6 h1.8 l1 5.8 h-3 l-0.2-2.6 h-1.8 l-0.2 2.6 h-3z" fill="#050505"/>
</g>
</svg>

<!-- STATUS BAR -->
<div class="a" id="status">
 <div class="pane" style="left:1.0px;width:117.4px"><span style="letter-spacing:-0.037px">FITC 100% CAM</span></div>
 <div class="pane" style="left:120.4px;width:26.0px"><span style="letter-spacing:-0.001px">50%</span></div>
 <div class="pane" style="left:148.4px;width:40.0px"><span style="letter-spacing:0.073px">1/1</span></div>
 <div class="pane" style="left:190.4px;width:89.2px"><span style="letter-spacing:0.006px">(1016, 446) -&gt; 103</span></div>
 <div class="pane" style="left:281.6px;width:68.0px"><span style="letter-spacing:0.052px">1 pixel = 1 pixel</span></div>
 <div class="pane" style="left:351.6px;width:74.8px"><span style="letter-spacing:0.111px">27.2 GB physical memory</span></div>
 <div class="pane" style="left:428.4px;width:75.2px"><span style="letter-spacing:0.111px">58.5 GB virtual memory</span></div>
 <svg class="a" style="left:683.5px;top:4.5px" width="6" height="6" viewBox="0 0 6 6"><path d="M6 0 L0 6 H6Z" fill="#d0d0d0"/><path d="M5.6 1.6 L1.6 5.6 M5.6 3.6 L3.6 5.6" stroke="#a8a8a8" stroke-width="0.7"/></svg>
</div>

</body></html>
